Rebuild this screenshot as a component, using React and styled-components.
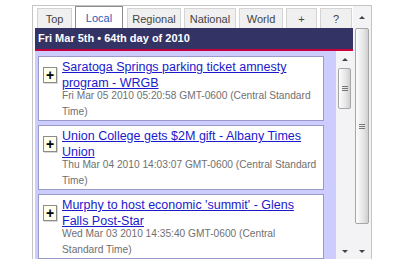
import React from 'react';
import styled, { createGlobalStyle } from 'styled-components';

const Global = createGlobalStyle`
    body {
        margin: 0;
        background: #fff;
        font-family: "Liberation Sans", Arial, sans-serif;
    }
`;

const Frame = styled.div`
    margin: 5px 0 0 32px;
    width: 338px;
    height: 253px;
    border: 1px solid #c4c4c4;
    border-bottom: none;
    display: flex;
    overflow: hidden;
`;

const Main = styled.div`
    width: 320px;
    display: flex;
    flex-direction: column;
`;

const Tabs = styled.div`
    display: flex;
    align-items: flex-end;
    gap: 3px;
    height: 22px;
    padding-left: 4px;
`;

const Tab = styled.div`
    width: ${p => p.w}px;
    margin-left: ${p => p.ml || 0}px;
    height: ${p => (p.active ? 22 : 20)}px;
    box-sizing: border-box;
    display: flex;
    align-items: center;
    justify-content: center;
    font-size: 11px;
    color: ${p => (p.active ? '#2a5ab8' : '#444')};
    background: ${p => (p.active ? '#fff' : '#f0f0f0')};
    border: 1px solid ${p => (p.active ? '#8c8c8c' : '#d4d4d4')};
    border-bottom: none;
`;

const Header = styled.div`
    margin-left: 2px;
    height: 21px;
    background: #333366;
    border-bottom: 2px solid #c8003c;
    color: #fff;
    font-weight: bold;
    font-size: 11px;
    line-height: 21px;
    padding-left: 3px;
`;

const Body = styled.div`
    margin-left: 2px;
    flex: 1;
    display: flex;
    background: #ccccff;
    overflow: hidden;
`;

const List = styled.div`
    flex: 1;
    padding: 5px 12px 0 3px;
    display: flex;
    flex-direction: column;
    gap: 4px;
`;

const Item = styled.div`
    background: #fff;
    border: 1px solid #9a9ac8;
    padding: 2px 4px 0 4px;
    display: flex;
    gap: 5px;
`;

const Plus = styled.div`
    flex: none;
    width: 14px;
    height: 16px;
    box-sizing: border-box;
    margin-top: 8px;
    background: #ffffec;
    border: 1px solid #8c8c8c;
    box-shadow: 1px 1px 0 #d8d8d8;
    display: flex;
    align-items: center;
    justify-content: center;
    font-size: 14px;
    font-weight: bold;
    color: #000;
    line-height: 1;
`;

const Text = styled.div`
    flex: 1;
`;

const Title = styled.a`
    display: block;
    font-size: 12.5px;
    line-height: 16px;
    color: #1a1acc;
    text-decoration: underline;
`;

const Date = styled.div`
    margin-top: -3px;
    font-size: 10.2px;
    line-height: 16px;
    color: #707070;
`;

const Scroll = styled.div`
    flex: none;
    width: ${p => p.w}px;
    background: #f3f3f6;
    display: flex;
    flex-direction: column;
    align-items: center;
`;

const Arrow = styled.div`
    height: ${p => p.h}px;
    display: flex;
    align-items: center;
    justify-content: center;
    &::after {
        content: '';
        border-left: 3px solid transparent;
        border-right: 3px solid transparent;
        ${p => (p.down ? 'border-top: 3px solid #444;' : 'border-bottom: 3px solid #444;')}
    }
`;

const Thumb = styled.div`
    width: ${p => p.w}px;
    height: ${p => p.h}px;
    box-sizing: border-box;
    border: 1px solid #a6a6a6;
    border-radius: 2px;
    background: linear-gradient(to right, #fdfdfd, #e6e6e6 60%, #cfcfcf);
    display: flex;
    flex-direction: column;
    align-items: center;
    justify-content: center;
    gap: 1px;
`;

const Grip = styled.span`
    width: 6px;
    height: 1px;
    background: #777;
`;

const Spacer = styled.div`
    flex: 1;
`;

const news = [
    {
        title: 'Saratoga Springs parking ticket amnesty program - WRGB',
        date: 'Fri Mar 05 2010 05:20:58 GMT-0600 (Central Standard Time)',
    },
    {
        title: 'Union College gets $2M gift - Albany Times Union',
        date: 'Thu Mar 04 2010 14:03:07 GMT-0600 (Central Standard Time)',
    },
    {
        title: "Murphy to host economic 'summit' - Glens Falls Post-Star",
        date: 'Wed Mar 03 2010 14:35:40 GMT-0600 (Central Standard Time)',
    },
];

const tabs = [
    { label: 'Top', w: 35 },
    { label: 'Local', w: 48, active: true },
    { label: 'Regional', w: 54, ml: 1 },
    { label: 'National', w: 52 },
    { label: 'World', w: 44 },
    { label: '+', w: 31 },
    { label: '?', w: 32 },
];

const ScrollBar = ({ w, thumbTop, thumbH, thumbW }) => (
    <Scroll w={w}>
        <Arrow h={thumbTop} />
        <Thumb w={thumbW} h={thumbH}>
            <Grip /><Grip /><Grip />
        </Thumb>
        <Spacer />
        <Arrow h={16} down />
    </Scroll>
);

const App = () => {
    return (
        <>
            <Global />
            <Frame>
                <Main>
                    <Tabs>
                        {tabs.map(t => (
                            <Tab key={t.label} w={t.w} ml={t.ml} active={t.active}>{t.label}</Tab>
                        ))}
                    </Tabs>
                    <Header>Fri Mar 5th • 64th day of 2010</Header>
                    <Body>
                        <List>
                            {news.map(n => (
                                <Item key={n.title}>
                                    <Plus>+</Plus>
                                    <Text>
                                        <Title href="#">{n.title}</Title>
                                        <Date>{n.date}</Date>
                                    </Text>
                                </Item>
                            ))}
                        </List>
                        <ScrollBar w={17} thumbTop={17} thumbH={41} thumbW={13} />
                    </Body>
                </Main>
                <ScrollBar w={18} thumbTop={22} thumbH={196} thumbW={14} />
            </Frame>
        </>
    );
};

export default App;
